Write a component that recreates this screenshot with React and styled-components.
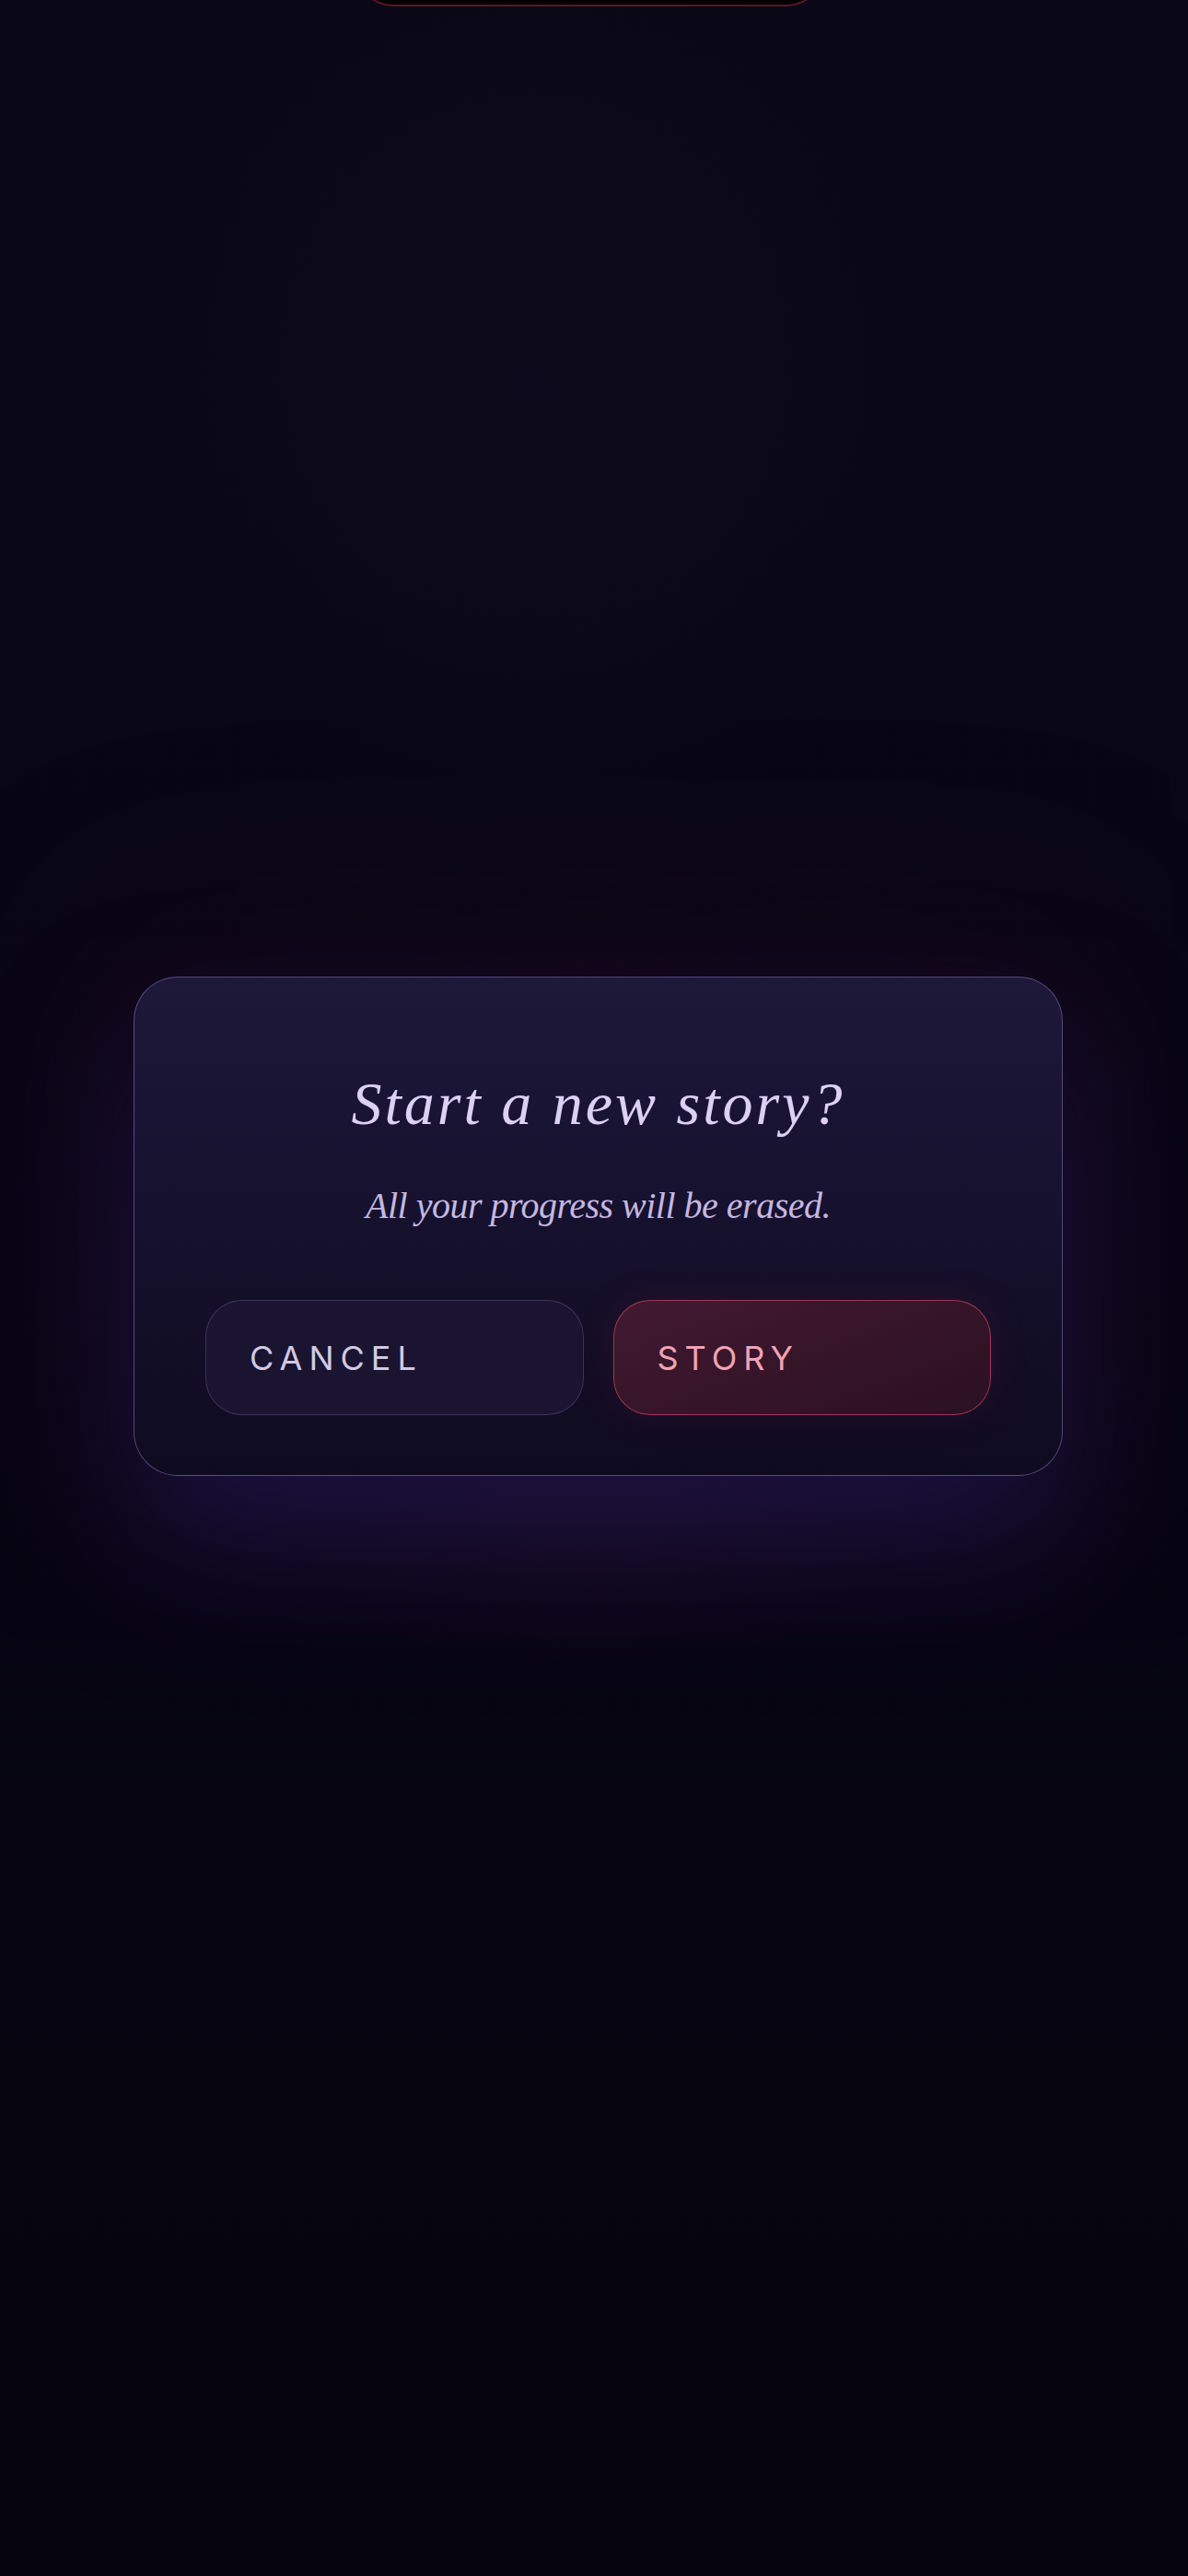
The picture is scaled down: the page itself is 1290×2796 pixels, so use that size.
import React from 'react'
import styled, { createGlobalStyle } from 'styled-components'

const GlobalStyle = createGlobalStyle`
  html, body {
    margin: 0;
    padding: 0;
    background: #08071a;
  }
  * { box-sizing: border-box; }
`

const Page = styled.div`
  width: 1290px;
  min-height: 2796px;
  overflow: hidden;
  display: flex;
  flex-direction: column;
  align-items: flex-start;
  background:
    radial-gradient(ellipse 640px 560px at 50% 1420px, rgba(55, 18, 45, 0.3), rgba(0, 0, 0, 0) 72%),
    radial-gradient(ellipse 700px 700px at 45% 420px, rgba(30, 22, 50, 0.22), rgba(0, 0, 0, 0) 70%),
    linear-gradient(180deg, #0a0817 0%, #080616 45%, #05040d 100%);
  font-family: Inter, "Liberation Sans", sans-serif;
`

const PeekButton = styled.div`
  width: 513px;
  height: 100px;
  margin: -93px 0 0 384px;
  border: 2px solid #5a1722;
  border-radius: 44px;
  background: #010003;
`

const Dialog = styled.div`
  width: 1009px;
  margin: 1053px 0 0 145px;
  padding: 97px 77px 65px;
  border: 1.5px solid rgba(124, 108, 184, 0.62);
  border-radius: 48px;
  background: linear-gradient(180deg, #1e1839 0%, #171230 40%, #0f0b1f 100%);
  box-shadow:
    0 80px 150px rgba(38, 28, 100, 0.5),
    0 0 220px 50px rgba(60, 12, 30, 0.26);
  display: flex;
  flex-direction: column;
  align-items: center;
`

const Title = styled.h2`
  margin: 0;
  font-family: "Liberation Serif", "DejaVu Serif", serif;
  font-style: italic;
  font-weight: 400;
  font-size: 66px;
  line-height: 1.2;
  letter-spacing: 3px;
  color: #dcd0f4;
`

const Subtitle = styled.p`
  margin: 48px 0 0;
  font-family: "Liberation Serif", "DejaVu Serif", serif;
  font-style: italic;
  font-size: 40px;
  line-height: 1.2;
  letter-spacing: -0.5px;
  color: #c5b8e0;
`

const Actions = styled.div`
  width: 100%;
  margin-top: 78px;
  display: grid;
  grid-template-columns: 1fr 1fr;
  gap: 32px;
`

const Button = styled.button`
  height: 125px;
  padding: 0 0 0 47px;
  display: flex;
  align-items: center;
  border-radius: 40px;
  font-family: Inter, "Liberation Sans", sans-serif;
  font-size: 36px;
  font-weight: 400;
  letter-spacing: 7px;
  text-transform: uppercase;
  cursor: pointer;
  border: 1.5px solid ${p => (p.$danger ? 'rgba(206, 72, 92, 0.7)' : 'rgba(112, 100, 160, 0.4)')};
  color: ${p => (p.$danger ? '#f2a3b3' : '#d2c9e4')};
  background: ${p =>
    p.$danger
      ? 'linear-gradient(160deg, #421a32 0%, #351428 55%, #2b1023 100%)'
      : '#1a1430'};
  box-shadow: ${p => (p.$danger ? '0 0 40px rgba(150, 30, 60, 0.16)' : 'none')};
`

export default function App() {
  return (
    <Page>
      <GlobalStyle />
      <PeekButton />
      <Dialog>
        <Title>Start a new story?</Title>
        <Subtitle>All your progress will be erased.</Subtitle>
        <Actions>
          <Button>Cancel</Button>
          <Button $danger>Story</Button>
        </Actions>
      </Dialog>
    </Page>
  )
}
